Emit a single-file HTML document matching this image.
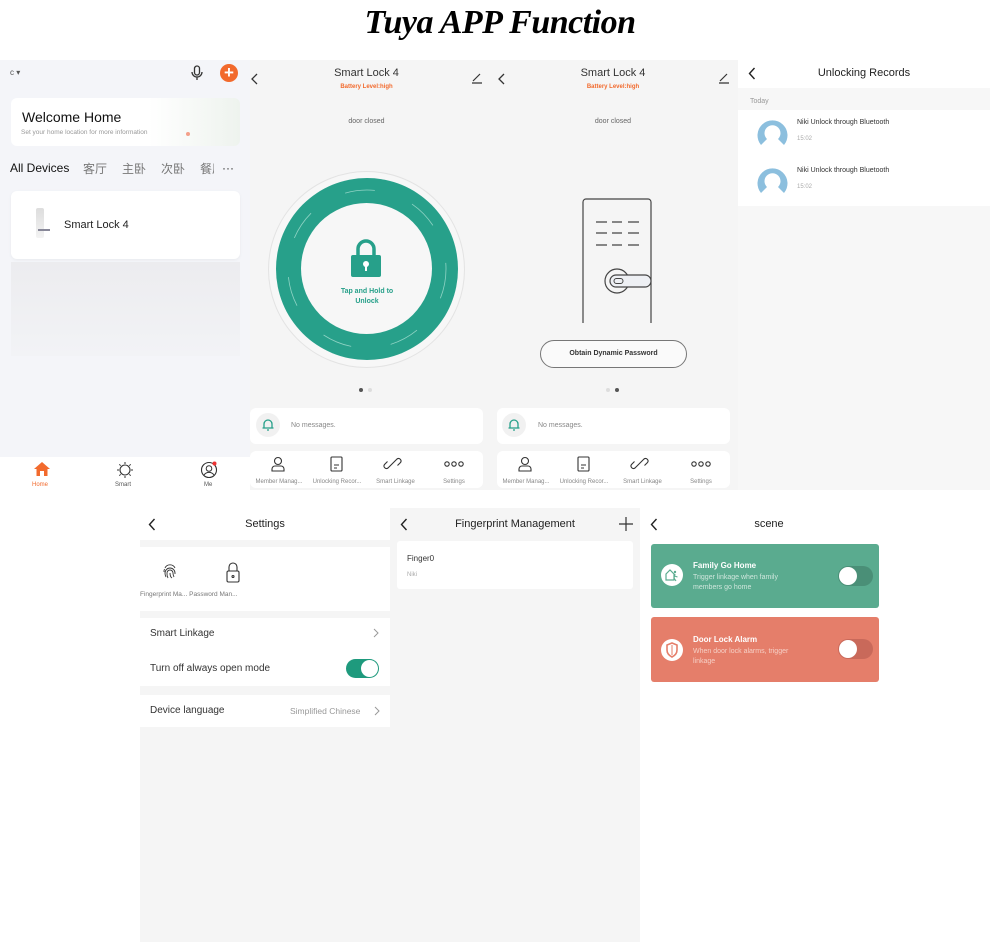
<!DOCTYPE html>
<html><head><meta charset="utf-8">
<style>
*{margin:0;padding:0;box-sizing:border-box}
body{width:1000px;height:942px;background:#fff;position:relative;overflow:hidden;font-family:"Liberation Sans","Noto Sans CJK SC",sans-serif;color:#222}
.a{position:absolute}
.t{white-space:nowrap}
.title{left:0;width:1000px;top:4px;text-align:center;font-family:"Liberation Serif",serif;font-weight:bold;font-style:italic;font-size:34px;color:#000;letter-spacing:-0.5px}
.card{background:#fff;border-radius:6px}
.tab{font-size:6px;color:#888;text-align:center}
.cn{font-size:12px;color:#777;top:160px}
</style></head><body>
<div class="a title">Tuya APP Function</div>

<!-- Panel 1 home -->
<div class="a" style="left:0;top:60px;width:250px;height:397px;background:#f4f5f9"></div>
<div class="a t" style="left:10px;top:68px;font-size:8px;color:#555">c ▾</div>
<svg class="a" style="left:190px;top:65px" width="14" height="16" viewBox="0 0 14 16"><rect x="4.5" y="1" width="5" height="9" rx="2.5" fill="none" stroke="#333" stroke-width="1.3"/><path d="M2 7a5 5 0 0 0 10 0M7 12v3" fill="none" stroke="#333" stroke-width="1.3"/></svg>
<div class="a" style="left:220px;top:64px;width:18px;height:18px;border-radius:50%;background:#f26a2d;color:#fff;font-size:17px;line-height:17px;text-align:center;font-weight:bold">+</div>
<div class="a card" style="left:11px;top:98px;width:229px;height:48px;background:linear-gradient(90deg,#fff 60%,#eef3ee)"></div>
<div class="a t" style="left:22px;top:109px;font-size:14px;color:#111">Welcome Home</div>
<div class="a t" style="left:21px;top:129px;font-size:6.5px;color:#999">Set your home location for more information</div>
<div class="a" style="left:186px;top:132px;width:4px;height:4px;border-radius:50%;background:#f4a08a"></div>
<div class="a t" style="left:10px;top:161px;font-size:12px;color:#111">All Devices</div>
<div class="a t cn" style="left:83px">客厅</div>
<div class="a t cn" style="left:122px">主卧</div>
<div class="a t cn" style="left:161px">次卧</div>
<div class="a t cn" style="left:200px">餐厅</div>
<div class="a" style="left:214px;top:157px;width:28px;height:22px;background:#f4f5f9;font-size:12px;color:#333;text-align:center;line-height:22px">···</div>
<div class="a card" style="left:11px;top:191px;width:229px;height:68px;box-shadow:0 1px 3px rgba(0,0,0,.05)"></div>
<div class="a" style="left:36px;top:208px;width:8px;height:30px;background:linear-gradient(#ddd,#f3f3f3);border-radius:2px"></div>
<div class="a" style="left:38px;top:229px;width:12px;height:2px;background:#889"></div>
<div class="a t" style="left:64px;top:219px;font-size:11px;color:#222">Smart Lock 4</div>
<div class="a" style="left:11px;top:262px;width:229px;height:94px;background:linear-gradient(#ececef,#f2f3f6)"></div>
<div class="a" style="left:0;top:457px;width:250px;height:36px;background:#fff"></div>
<svg class="a" style="left:33px;top:461px" width="18" height="16" viewBox="0 0 18 16"><path d="M9 1L1 8h2.5v7h11V8H17z" fill="#f26a2d"/><rect x="7" y="10" width="4" height="5" fill="#fff"/></svg>
<div class="a t" style="left:32px;top:482px;font-size:6px;color:#f26a2d">Home</div>
<svg class="a" style="left:116px;top:461px" width="18" height="18" viewBox="0 0 18 18"><circle cx="9" cy="9" r="5" fill="none" stroke="#333" stroke-width="1.1"/><path d="M9 1v2M9 15v2M1 9h2M15 9h2M3.3 3.3l1.4 1.4M13.3 13.3l1.4 1.4M3.3 14.7l1.4-1.4M13.3 4.7l1.4-1.4" stroke="#333"/></svg>
<div class="a t" style="left:115px;top:482px;font-size:6px;color:#555">Smart</div>
<svg class="a" style="left:200px;top:461px" width="18" height="18" viewBox="0 0 18 18"><circle cx="9" cy="9" r="7.5" fill="none" stroke="#333" stroke-width="1.1"/><circle cx="9" cy="7.5" r="2.8" fill="none" stroke="#333"/><path d="M4 14a6 6 0 0 1 10 0" fill="none" stroke="#333"/><circle cx="14.5" cy="2.5" r="2" fill="#e33"/></svg>
<div class="a t" style="left:204px;top:482px;font-size:6px;color:#555">Me</div>

<!-- Panel 2 lock -->
<div class="a" style="left:250px;top:60px;width:243px;height:430px;background:#f5f5f5"></div>
<svg class="a" style="left:251px;top:73px" width="8" height="12" viewBox="0 0 8 12"><path d="M6 1L1 6l5 5" fill="none" stroke="#333" stroke-width="1.3"/></svg>
<div class="a t" style="left:250px;top:67px;width:233px;text-align:center;font-size:11px;color:#333">Smart Lock 4</div>
<div class="a t" style="left:250px;top:84px;width:233px;text-align:center;font-size:6px;color:#f26a2d;font-weight:bold">Battery Level:high</div>
<svg class="a" style="left:471px;top:72px" width="12" height="12" viewBox="0 0 12 12"><path d="M2 9l7-7M1 11h10" stroke="#333" stroke-width="1.2"/></svg>
<div class="a t" style="left:250px;top:118px;width:233px;text-align:center;font-size:7px;color:#666">door closed</div>
<div class="a" style="left:268px;top:171px;width:197px;height:197px;border-radius:50%;border:1px solid #e3e3e3;background:#f7f7f7"></div>
<div class="a" style="left:276px;top:178px;width:182px;height:182px;border-radius:50%;background:#27a08a"></div>
<div class="a" style="left:301px;top:203px;width:131px;height:131px;border-radius:50%;background:#f7f7f7"></div>
<svg class="a" style="left:276px;top:178px" width="182" height="182" viewBox="0 0 182 182"><circle cx="91" cy="91" r="79" fill="none" stroke="#8fd3c4" stroke-width="0.8" stroke-dasharray="30 40"/></svg>
<svg class="a" style="left:350px;top:239px" width="32" height="40" viewBox="0 0 32 40"><path d="M8 16V10a8 8 0 0 1 16 0v6" fill="none" stroke="#27a08a" stroke-width="3.5"/><rect x="1" y="16" width="30" height="22" rx="2" fill="#27a08a"/><circle cx="16" cy="25" r="3" fill="#fff"/><rect x="15" y="26" width="2" height="6" fill="#fff"/></svg>
<div class="a" style="left:320px;top:287px;width:94px;text-align:center;font-size:7px;color:#27a08a;font-weight:bold;line-height:10px">Tap and Hold to<br>Unlock</div>
<div class="a" style="left:359px;top:388px;width:4px;height:4px;border-radius:50%;background:#555"></div>
<div class="a" style="left:368px;top:388px;width:4px;height:4px;border-radius:50%;background:#ddd"></div>
<div class="a card" style="left:250px;top:408px;width:233px;height:36px"></div>
<div class="a" style="left:256px;top:413px;width:24px;height:24px;border-radius:50%;background:#f1f1f1"></div>
<svg class="a" style="left:261px;top:418px" width="14" height="14" viewBox="0 0 14 14"><path d="M3 10V6a4 4 0 0 1 8 0v4h1.5H1.5zM6 12h2" fill="none" stroke="#27a08a" stroke-width="1.3"/></svg>
<div class="a t" style="left:291px;top:422px;font-size:7px;color:#888">No messages.</div>
<div class="a card" style="left:250px;top:451px;width:233px;height:37px"></div>

<!-- Panel 3 -->
<div class="a" style="left:493px;top:60px;width:245px;height:430px;background:#f5f5f5"></div>
<svg class="a" style="left:498px;top:73px" width="8" height="12" viewBox="0 0 8 12"><path d="M6 1L1 6l5 5" fill="none" stroke="#333" stroke-width="1.3"/></svg>
<div class="a t" style="left:493px;top:67px;width:240px;text-align:center;font-size:11px;color:#333">Smart Lock 4</div>
<div class="a t" style="left:493px;top:84px;width:240px;text-align:center;font-size:6px;color:#f26a2d;font-weight:bold">Battery Level:high</div>
<svg class="a" style="left:718px;top:72px" width="12" height="12" viewBox="0 0 12 12"><path d="M2 9l7-7M1 11h10" stroke="#333" stroke-width="1.2"/></svg>
<div class="a t" style="left:493px;top:118px;width:240px;text-align:center;font-size:7px;color:#666">door closed</div>
<svg class="a" style="left:580px;top:197px" width="80" height="127" viewBox="0 0 80 127"><path d="M3 126V5a3 3 0 0 1 3-3h62a3 3 0 0 1 3 3v121" fill="none" stroke="#444" stroke-width="1.2"/><path d="M16 25h11M32 25h10M48 25h11M16 36h11M32 36h10M48 36h11M16 48h11M32 48h10M48 48h11" stroke="#444" stroke-width="1.2"/><circle cx="37" cy="84" r="12" fill="#f5f5f5" stroke="#444" stroke-width="1.2"/><rect x="30" y="78" width="41" height="12" rx="6" fill="#eef0f4" stroke="#444" stroke-width="1.2"/><rect x="34" y="81.5" width="9" height="5" rx="2.5" fill="none" stroke="#444"/></svg>
<div class="a" style="left:540px;top:340px;width:147px;height:28px;border:1px solid #777;border-radius:14px;background:#fafafa;text-align:center;font-size:7px;font-weight:bold;line-height:26px;color:#333">Obtain Dynamic Password</div>
<div class="a" style="left:606px;top:388px;width:4px;height:4px;border-radius:50%;background:#ddd"></div>
<div class="a" style="left:615px;top:388px;width:4px;height:4px;border-radius:50%;background:#555"></div>
<div class="a card" style="left:497px;top:408px;width:233px;height:36px"></div>
<div class="a" style="left:502px;top:413px;width:24px;height:24px;border-radius:50%;background:#f1f1f1"></div>
<svg class="a" style="left:507px;top:418px" width="14" height="14" viewBox="0 0 14 14"><path d="M3 10V6a4 4 0 0 1 8 0v4h1.5H1.5zM6 12h2" fill="none" stroke="#27a08a" stroke-width="1.3"/></svg>
<div class="a t" style="left:538px;top:422px;font-size:7px;color:#888">No messages.</div>
<div class="a card" style="left:497px;top:451px;width:233px;height:37px"></div>

<svg class="a" style="left:250px;top:455px" width="490" height="20" viewBox="0 0 490 20">
<g fill="none" stroke="#333" stroke-width="1.1">
<circle cx="28" cy="6" r="3.5"/><path d="M22 16v-2a3 3 0 0 1 3-3h6a3 3 0 0 1 3 3v2z"/>
<rect x="81" y="2" width="11" height="14" rx="1"/><path d="M84 10h5M84 13h3"/>
<path d="M141 10l-3 3a2.5 2.5 0 0 1-3.5-3.5l3-3M144 7l3-3a2.5 2.5 0 0 1 3.5 3.5l-3 3M141 10l3-3"/>
<circle cx="197" cy="9" r="2.2"/><circle cx="204" cy="9" r="2.2"/><circle cx="211" cy="9" r="2.2"/>
</g>
<g transform="translate(247,0)" fill="none" stroke="#333" stroke-width="1.1">
<circle cx="28" cy="6" r="3.5"/><path d="M22 16v-2a3 3 0 0 1 3-3h6a3 3 0 0 1 3 3v2z"/>
<rect x="81" y="2" width="11" height="14" rx="1"/><path d="M84 10h5M84 13h3"/>
<path d="M141 10l-3 3a2.5 2.5 0 0 1-3.5-3.5l3-3M144 7l3-3a2.5 2.5 0 0 1 3.5 3.5l-3 3M141 10l3-3"/>
<circle cx="197" cy="9" r="2.2"/><circle cx="204" cy="9" r="2.2"/><circle cx="211" cy="9" r="2.2"/>
</g></svg>
<div class="a t tab" style="left:250px;top:479px;width:58px">Member Manag...</div>
<div class="a t tab" style="left:307px;top:479px;width:60px">Unlocking Recor...</div>
<div class="a t tab" style="left:367px;top:479px;width:57px">Smart Linkage</div>
<div class="a t tab" style="left:425px;top:479px;width:58px">Settings</div>
<div class="a t tab" style="left:497px;top:479px;width:58px">Member Manag...</div>
<div class="a t tab" style="left:554px;top:479px;width:60px">Unlocking Recor...</div>
<div class="a t tab" style="left:614px;top:479px;width:57px">Smart Linkage</div>
<div class="a t tab" style="left:672px;top:479px;width:58px">Settings</div>

<!-- Panel 4 records -->
<div class="a" style="left:738px;top:60px;width:252px;height:430px;background:#f7f7f7"></div>
<div class="a" style="left:738px;top:60px;width:252px;height:28px;background:#fff"></div>
<svg class="a" style="left:748px;top:67px" width="8" height="13" viewBox="0 0 8 13"><path d="M6.5 1L1.5 6.5l5 5.5" fill="none" stroke="#222" stroke-width="1.4"/></svg>
<div class="a t" style="left:738px;top:67px;width:252px;text-align:center;font-size:11px;color:#222">Unlocking Records</div>
<div class="a t" style="left:750px;top:98px;font-size:7px;color:#999">Today</div>
<div class="a" style="left:738px;top:110px;width:252px;height:96px;background:#fff"></div>
<svg class="a" style="left:756px;top:117px" width="33" height="30" viewBox="0 0 33 30"><path d="M5 28A15 15 0 1 1 28 28L22 22A8 8 0 1 0 11 22Z" fill="#8cbfde"/></svg>
<svg class="a" style="left:756px;top:165px" width="33" height="30" viewBox="0 0 33 30"><path d="M5 28A15 15 0 1 1 28 28L22 22A8 8 0 1 0 11 22Z" fill="#8cbfde"/></svg>
<div class="a t" style="left:797px;top:119px;font-size:7px;color:#333">Niki Unlock through Bluetooth</div>
<div class="a t" style="left:797px;top:136px;font-size:6px;color:#aaa">15:02</div>
<div class="a t" style="left:797px;top:167px;font-size:7px;color:#333">Niki Unlock through Bluetooth</div>
<div class="a t" style="left:797px;top:184px;font-size:6px;color:#aaa">15:02</div>

<!-- Settings -->
<div class="a" style="left:140px;top:508px;width:500px;height:434px;background:#f5f5f5"></div>
<div class="a" style="left:140px;top:508px;width:250px;height:32px;background:#fff"></div>
<svg class="a" style="left:148px;top:518px" width="8" height="13" viewBox="0 0 8 13"><path d="M6.5 1L1.5 6.5l5 5.5" fill="none" stroke="#222" stroke-width="1.4"/></svg>
<div class="a t" style="left:140px;top:518px;width:250px;text-align:center;font-size:11px;color:#222">Settings</div>
<div class="a" style="left:140px;top:547px;width:250px;height:64px;background:#fff"></div>
<svg class="a" style="left:161px;top:562px" width="18" height="18" viewBox="0 0 18 18" fill="none" stroke="#333" stroke-width="0.9"><path d="M4 6a5.5 5.5 0 0 1 10 0M3 10a6 6 0 0 1 .5-3M5 15a8 8 0 0 1-1-4 5 5 0 0 1 10 0v1M7 16a9 9 0 0 1-1-5 3 3 0 0 1 6 0c0 2 .5 3 1 4M9 11c0 2 .5 4 2 5"/></svg>
<svg class="a" style="left:225px;top:561px" width="16" height="22" viewBox="0 0 16 22" fill="none" stroke="#333" stroke-width="1.1"><path d="M4 10V6a4 4 0 0 1 8 0v4"/><rect x="2" y="10" width="12" height="11" rx="1.5"/><circle cx="8" cy="15.5" r="1"/></svg>
<div class="a t" style="left:140px;top:591px;font-size:6.5px;color:#777">Fingerprint Ma... Password Man...</div>
<div class="a" style="left:140px;top:618px;width:250px;height:68px;background:#fff"></div>
<div class="a t" style="left:150px;top:628px;font-size:10px;color:#333">Smart Linkage</div>
<svg class="a" style="left:373px;top:628px" width="6" height="10" viewBox="0 0 6 10"><path d="M1 1l4 4-4 4" fill="none" stroke="#999"/></svg>
<div class="a t" style="left:150px;top:663px;font-size:10px;color:#333">Turn off always open mode</div>
<div class="a" style="left:346px;top:659px;width:33px;height:19px;border-radius:10px;background:#1e9a7d"></div>
<div class="a" style="left:361px;top:660px;width:17px;height:17px;border-radius:50%;background:#fff"></div>
<div class="a" style="left:140px;top:695px;width:250px;height:32px;background:#fff"></div>
<div class="a t" style="left:150px;top:705px;font-size:10px;color:#333">Device language</div>
<div class="a t" style="left:290px;top:706px;font-size:8.5px;color:#999">Simplified Chinese</div>
<svg class="a" style="left:374px;top:706px" width="6" height="10" viewBox="0 0 6 10"><path d="M1 1l4 4-4 4" fill="none" stroke="#999"/></svg>

<!-- Fingerprint -->
<div class="a" style="left:390px;top:508px;width:250px;height:32px;background:#f5f5f5"></div>
<svg class="a" style="left:400px;top:518px" width="8" height="13" viewBox="0 0 8 13"><path d="M6.5 1L1.5 6.5l5 5.5" fill="none" stroke="#222" stroke-width="1.4"/></svg>
<div class="a t" style="left:390px;top:518px;width:250px;text-align:center;font-size:11px;color:#222">Fingerprint Management</div>
<svg class="a" style="left:619px;top:517px" width="14" height="14" viewBox="0 0 14 14"><path d="M7 0v14M0 7h14" stroke="#333" stroke-width="1.2"/></svg>
<div class="a" style="left:397px;top:541px;width:236px;height:48px;background:#fff;border-radius:3px"></div>
<div class="a t" style="left:407px;top:554px;font-size:8px;color:#333">Finger0</div>
<div class="a t" style="left:407px;top:572px;font-size:6px;color:#aaa">Niki</div>

<!-- scene -->
<div class="a" style="left:640px;top:508px;width:250px;height:434px;background:#fff"></div>
<svg class="a" style="left:650px;top:518px" width="8" height="13" viewBox="0 0 8 13"><path d="M6.5 1L1.5 6.5l5 5.5" fill="none" stroke="#222" stroke-width="1.4"/></svg>
<div class="a t" style="left:640px;top:518px;width:258px;text-align:center;font-size:11px;color:#222">scene</div>
<div class="a" style="left:651px;top:544px;width:228px;height:64px;background:#5aab8f;border-radius:3px"></div>
<div class="a" style="left:661px;top:564px;width:22px;height:22px;border-radius:50%;background:#fff"></div>
<svg class="a" style="left:665px;top:568px" width="14" height="14" viewBox="0 0 14 14"><path d="M1 6l4-4 4 4v6H1z" fill="none" stroke="#5aab8f" stroke-width="1.2"/><circle cx="10" cy="4" r="1.2" fill="#5aab8f"/><path d="M10 6l-1 4 2 3M9.5 8l3 1" stroke="#5aab8f" stroke-width="1.1" fill="none"/></svg>
<div class="a t" style="left:693px;top:561px;font-size:8px;font-weight:bold;color:#fff">Family Go Home</div>
<div class="a" style="left:693px;top:573px;font-size:7px;color:#cfe6dc;line-height:10px;width:108px">Trigger linkage when family members go home</div>
<div class="a" style="left:838px;top:566px;width:35px;height:20px;border-radius:10px;background:#4a8f77"></div>
<div class="a" style="left:839px;top:567px;width:18px;height:18px;border-radius:50%;background:#fff"></div>
<div class="a" style="left:651px;top:617px;width:228px;height:65px;background:#e57e6a;border-radius:3px"></div>
<div class="a" style="left:661px;top:639px;width:22px;height:22px;border-radius:50%;background:#fff"></div>
<svg class="a" style="left:665px;top:642px" width="14" height="16" viewBox="0 0 14 16"><path d="M7 1L2 3v5c0 3 2 5.5 5 7 3-1.5 5-4 5-7V3z" fill="none" stroke="#e57e6a" stroke-width="1.6"/><path d="M7 3v10" stroke="#e57e6a"/></svg>
<div class="a t" style="left:693px;top:635px;font-size:8px;font-weight:bold;color:#fff">Door Lock Alarm</div>
<div class="a" style="left:693px;top:647px;font-size:7px;color:#f6cfc5;line-height:10px;width:112px">When door lock alarms, trigger linkage</div>
<div class="a" style="left:838px;top:639px;width:35px;height:20px;border-radius:10px;background:#c9695a"></div>
<div class="a" style="left:839px;top:640px;width:18px;height:18px;border-radius:50%;background:#fff"></div>
</body></html>
